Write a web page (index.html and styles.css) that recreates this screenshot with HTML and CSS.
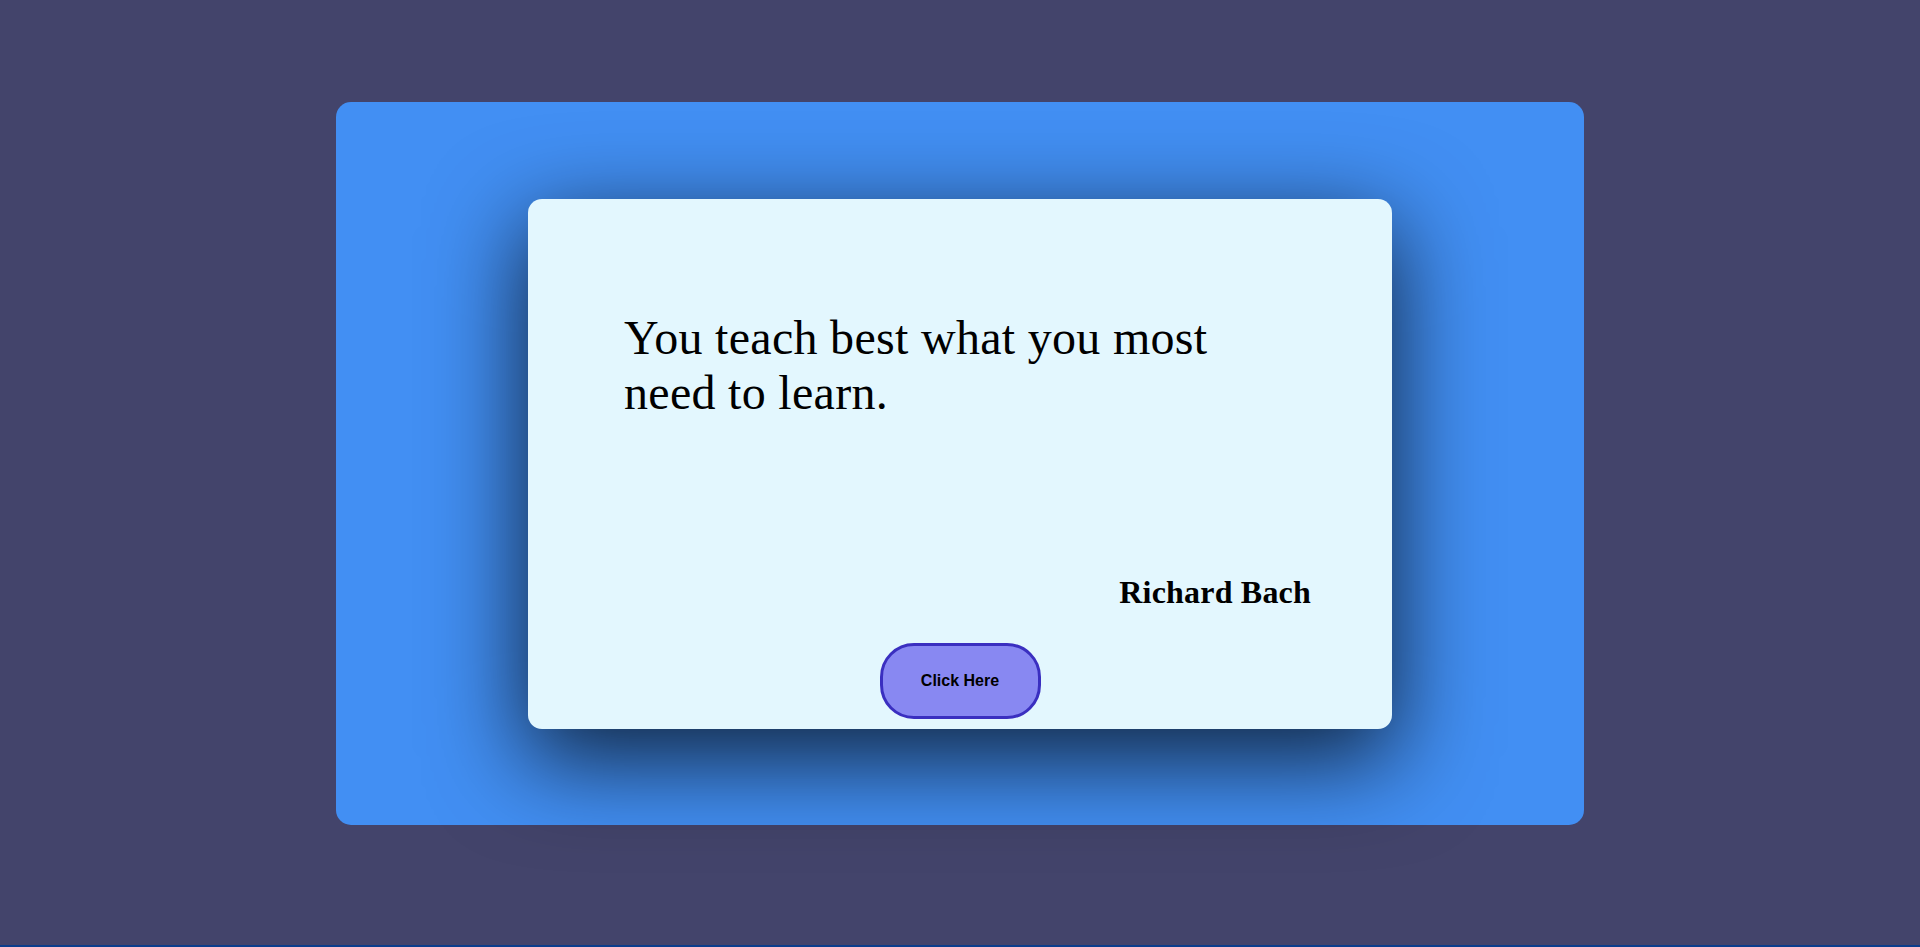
FILE: index.html
```html
<!DOCTYPE html>
<html lang="en">
<head>
<meta charset="utf-8">
<title>Quote</title>
<link rel="stylesheet" href="styles.css">
</head>
<body>
<main class="page">
  <section class="stage">
    <article class="card">
      <p class="quote">You teach best what you most need to learn.</p>
      <h2 class="author">Richard Bach</h2>
      <button class="btn" type="button">Click Here</button>
    </article>
  </section>
</main>
</body>
</html>
```
FILE: styles.css
```css
* { box-sizing: border-box; }
html, body { margin: 0; padding: 0; }
body {
  background: #43446b;
  height: 947px;
  border-bottom: 2px solid #0b3d8c;
  overflow: hidden;
  font-family: "Liberation Serif", "Times New Roman", serif;
}
.page {
  display: flex;
  justify-content: center;
  padding-top: 102px;
}
.stage {
  width: 1248px;
  height: 723px;
  background: #428ff3;
  border-radius: 15px;
  display: flex;
  align-items: center;
  justify-content: center;
}
.card {
  width: 864px;
  height: 530px;
  background: #e3f7fe;
  border-radius: 14px;
  box-shadow: 0 28px 95px 3px rgba(0, 0, 0, 0.75);
  display: flex;
  flex-direction: column;
  padding: 111px 0 10px 0;
}
.quote {
  margin: 0 0 0 96px;
  max-width: 620px;
  font-size: 48px;
  letter-spacing: 0.3px;
  line-height: normal;
  color: #000;
  font-weight: normal;
}
.author {
  margin: 154px 81px 0 0;
  text-align: right;
  font-size: 32px;
  letter-spacing: 0.2px;
  font-weight: bold;
  line-height: normal;
  color: #000;
}
.btn {
  align-self: center;
  margin-top: 32px;
  width: 161px;
  height: 76px;
  background: #8888f2;
  border: 3px solid #3a2fc0;
  border-radius: 34px;
  font-family: "Liberation Sans", Arial, sans-serif;
  font-size: 16px;
  font-weight: bold;
  color: #000;
  padding: 0;
}
```
